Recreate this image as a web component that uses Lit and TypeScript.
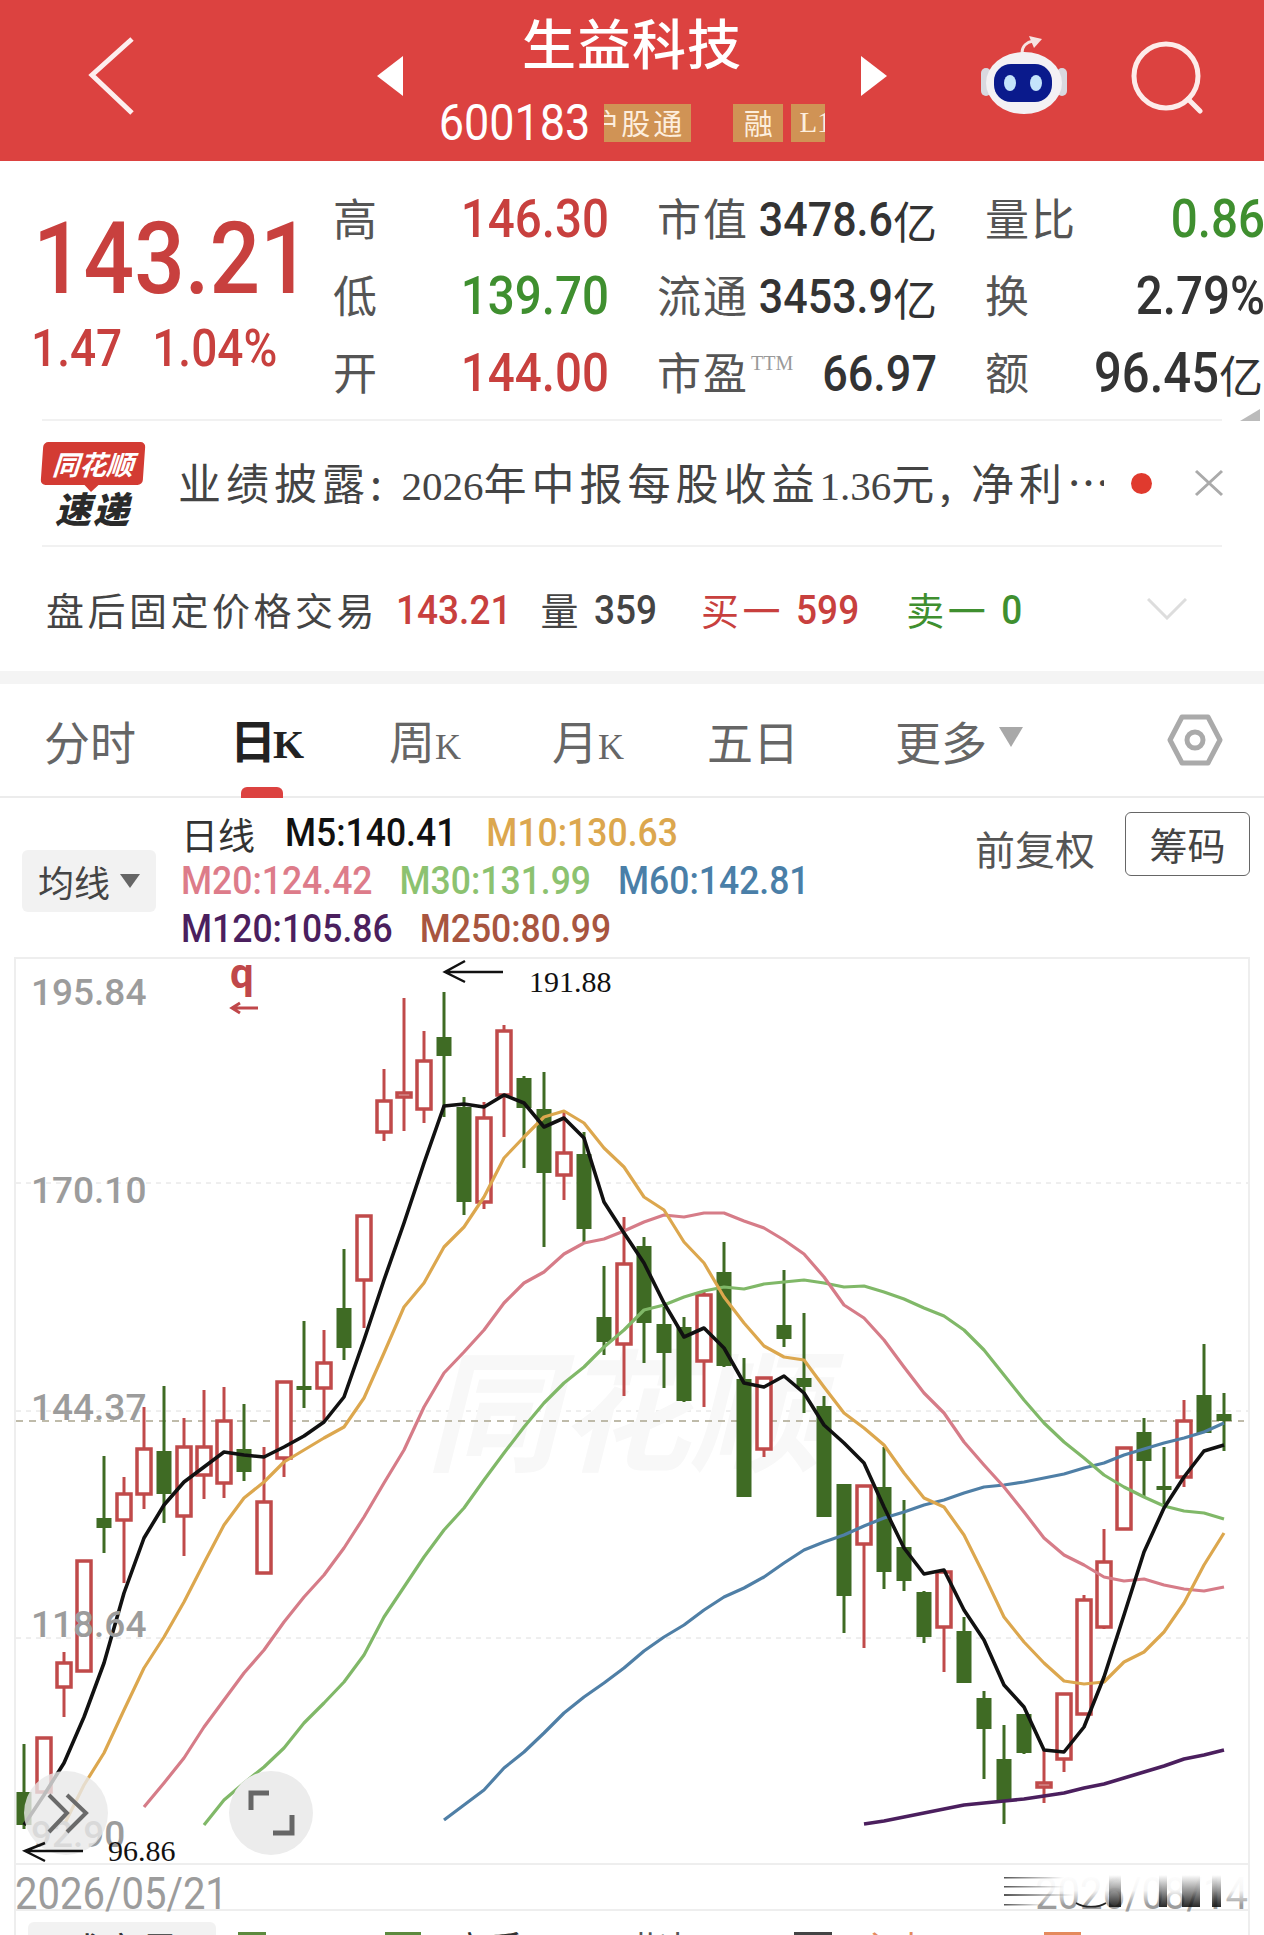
import { LitElement, html, css, svg } from "lit";
import { customElement } from "lit/decorators.js";

// [wick top, wick bottom, body top, body bottom, up?] in page pixels, x = 24 + 20 * index
const CANDLES: [number, number, number, number, number][] = [
  [1744, 1829, 1792, 1825, 0], [1738, 1792, 1738, 1792, 1], [1652, 1717, 1663, 1687, 1], [1561, 1671, 1561, 1671, 1],
  [1456, 1553, 1518, 1528, 0], [1477, 1583, 1494, 1520, 1], [1407, 1509, 1449, 1494, 1], [1386, 1523, 1451, 1494, 0],
  [1418, 1556, 1447, 1516, 1], [1390, 1499, 1447, 1475, 1], [1387, 1498, 1421, 1483, 1], [1404, 1481, 1449, 1472, 0],
  [1447, 1573, 1502, 1573, 1], [1382, 1477, 1382, 1458, 1], [1321, 1408, 1386, 1390, 0], [1330, 1422, 1363, 1388, 1],
  [1249, 1360, 1308, 1348, 0], [1216, 1328, 1216, 1280, 1], [1069, 1141, 1101, 1132, 1], [998, 1131, 1093, 1097, 1],
  [1031, 1123, 1061, 1109, 1], [992, 1117, 1037, 1056, 0], [1097, 1215, 1107, 1202, 0], [1102, 1209, 1118, 1202, 1],
  [1025, 1137, 1031, 1095, 1], [1076, 1168, 1078, 1108, 0], [1072, 1247, 1109, 1173, 0], [1112, 1200, 1153, 1175, 1],
  [1132, 1243, 1154, 1229, 0], [1266, 1355, 1317, 1342, 0], [1217, 1396, 1264, 1344, 1], [1237, 1363, 1246, 1323, 0],
  [1307, 1388, 1324, 1353, 0], [1317, 1402, 1327, 1401, 0], [1290, 1407, 1295, 1361, 1], [1242, 1367, 1272, 1366, 0],
  [1358, 1497, 1379, 1497, 0], [1378, 1457, 1378, 1449, 1], [1270, 1347, 1325, 1339, 0], [1313, 1413, 1378, 1387, 0],
  [1396, 1517, 1406, 1517, 0], [1484, 1633, 1484, 1596, 0], [1486, 1648, 1486, 1544, 1], [1447, 1589, 1487, 1572, 0],
  [1500, 1591, 1547, 1581, 0], [1591, 1643, 1592, 1637, 0], [1570, 1672, 1572, 1627, 1], [1617, 1683, 1631, 1683, 0],
  [1691, 1779, 1698, 1729, 0], [1725, 1824, 1759, 1801, 0], [1714, 1754, 1714, 1753, 0], [1750, 1803, 1783, 1787, 1],
  [1694, 1772, 1694, 1759, 1], [1595, 1714, 1600, 1714, 1], [1529, 1629, 1562, 1627, 1], [1448, 1529, 1448, 1529, 1],
  [1418, 1498, 1432, 1461, 0], [1447, 1505, 1486, 1490, 0], [1400, 1487, 1421, 1477, 1], [1344, 1433, 1395, 1433, 0],
  [1393, 1451, 1414, 1421, 0],
];

// moving averages: first x, then one y every 20px
const LINES: { color: string; w: number; x: number; ys: number[] }[] = [
  { color: "#4b1f5e", w: 3.6, x: 864, ys: [1824, 1821, 1817, 1813, 1809, 1805, 1803, 1801, 1799, 1796, 1793, 1788, 1784, 1778, 1772, 1766, 1759, 1755, 1750] },
  { color: "#4f7fa6", w: 3.2, x: 444, ys: [1820, 1805, 1790, 1768, 1752, 1733, 1713, 1697, 1683, 1668, 1651, 1637, 1625, 1610, 1597, 1588, 1577, 1563, 1550, 1542, 1535, 1526, 1518, 1512, 1505, 1500, 1493, 1487, 1485, 1482, 1478, 1474, 1468, 1463, 1455, 1449, 1443, 1438, 1432, 1423] },
  { color: "#80b868", w: 3.2, x: 204, ys: [1825, 1800, 1783, 1767, 1748, 1723, 1703, 1682, 1655, 1617, 1587, 1557, 1530, 1508, 1480, 1453, 1427, 1403, 1383, 1367, 1347, 1330, 1310, 1305, 1297, 1291, 1287, 1289, 1284, 1282, 1280, 1283, 1287, 1286, 1292, 1299, 1308, 1316, 1330, 1350, 1375, 1400, 1423, 1442, 1458, 1475, 1487, 1497, 1506, 1511, 1513, 1519] },
  { color: "#d67c88", w: 3.2, x: 144, ys: [1807, 1783, 1758, 1727, 1700, 1673, 1650, 1622, 1597, 1575, 1548, 1517, 1483, 1450, 1407, 1373, 1352, 1330, 1303, 1283, 1272, 1254, 1243, 1239, 1231, 1222, 1215, 1217, 1213, 1213, 1221, 1228, 1240, 1254, 1277, 1305, 1318, 1340, 1367, 1393, 1413, 1442, 1465, 1487, 1512, 1538, 1555, 1565, 1577, 1581, 1579, 1585, 1589, 1591, 1587] },
  { color: "#dca74e", w: 3.2, x: 64, ys: [1825, 1785, 1753, 1710, 1668, 1637, 1602, 1563, 1525, 1498, 1482, 1462, 1450, 1438, 1427, 1398, 1353, 1307, 1283, 1247, 1227, 1197, 1158, 1137, 1117, 1111, 1123, 1148, 1167, 1197, 1210, 1242, 1263, 1297, 1323, 1346, 1357, 1360, 1387, 1413, 1428, 1445, 1473, 1498, 1507, 1535, 1575, 1617, 1642, 1663, 1681, 1684, 1682, 1662, 1652, 1632, 1603, 1565, 1533] },
  { color: "#111", w: 3.6, x: 24, ys: [1825, 1795, 1763, 1717, 1663, 1593, 1538, 1505, 1482, 1467, 1452, 1455, 1457, 1447, 1436, 1422, 1397, 1340, 1280, 1223, 1163, 1106, 1104, 1107, 1095, 1103, 1127, 1118, 1138, 1202, 1233, 1263, 1303, 1337, 1328, 1348, 1383, 1387, 1376, 1393, 1425, 1443, 1463, 1507, 1548, 1574, 1570, 1610, 1640, 1685, 1707, 1750, 1752, 1727, 1677, 1615, 1552, 1508, 1477, 1451, 1445] },
];

const AXIS: [string, number][] = [["195.84", 1005], ["170.10", 1203], ["144.37", 1420], ["118.64", 1637]];

@customElement("kline-chart")
export class KlineChart extends LitElement {
  static styles = css`
    :host {
      display: block;
    }
    svg {
      display: block;
      width: 1232px;
      height: 904px;
    }
    .axis {
      font-family: Roboto, "Liberation Sans", sans-serif;
      font-size: 37px;
      font-weight: 500;
      fill: #9c9c9c;
    }
    .note {
      font-family: "Liberation Serif", serif;
      font-size: 30px;
      fill: #111;
    }
    .mark {
      font-family: Roboto, "Liberation Sans", sans-serif;
      font-size: 42px;
      font-weight: 700;
      fill: #c0474a;
    }
    .wm {
      font-family: "Noto Sans CJK SC", sans-serif;
      font-size: 132px;
      font-weight: 700;
      font-style: italic;
      fill: #f8f8f8;
    }
  `;

  candle(c: number[], i: number) {
    const x = 24 + i * 20;
    const [top, bottom, bodyTop, bodyBottom, up] = c;
    const color = up ? "#c04a4a" : "#3f6b24";
    if (up) {
      return svg`
        <line x1=${x} x2=${x} y1=${top} y2=${bottom} stroke=${color} stroke-width="3"></line>
        <rect x=${x - 7} y=${bodyTop} width="14" height=${bodyBottom - bodyTop} fill="#fff" stroke=${color} stroke-width="3.5"></rect>`;
    }
    return svg`
      <line x1=${x} x2=${x} y1=${top} y2=${bottom} stroke=${color} stroke-width="3"></line>
      <rect x=${x - 7.5} y=${bodyTop} width="15" height=${bodyBottom - bodyTop} fill=${color}></rect>`;
  }

  render() {
    return html`
      <svg viewBox="16 959 1232 904">
        <g stroke="#dedede" stroke-dasharray="5 5">
          <line x1="16" x2="1248" y1="1183" y2="1183"></line>
          <line x1="16" x2="1248" y1="1411" y2="1411"></line>
          <line x1="16" x2="1248" y1="1638" y2="1638"></line>
        </g>
        <text class="wm" x="426" y="1461">同花顺</text>
        <line x1="16" x2="1244" y1="1421" y2="1421" stroke="#aaa58f" stroke-width="1.5" stroke-dasharray="7 6"></line>
        ${CANDLES.map((c, i) => this.candle(c, i))}
        ${LINES.map(
          (l) => svg`<polyline fill="none" stroke=${l.color} stroke-width=${l.w} stroke-linejoin="round"
            points=${l.ys.map((y, i) => `${l.x + i * 20},${y}`).join(" ")}></polyline>`
        )}
        ${AXIS.map(([t, y]) => svg`<text class="axis" x="31" y=${y}>${t}</text>`)}
        <text class="axis" x="31" y="1847">92.90</text>

        <text class="mark" x="230" y="988">q</text>
        <path d="M258 1008H232M240 1003l-8 5 8 5" fill="none" stroke="#c0474a" stroke-width="3"></path>
        <path d="M503 972H445M465 961l-20 11 20 10" fill="none" stroke="#111" stroke-width="2.5"></path>
        <text class="note" x="529" y="992">191.88</text>

        <circle cx="66" cy="1813" r="42" fill="#e8e8e8" fill-opacity=".8"></circle>
        <path d="M49 1795l18 18-18 19M67 1795l19 18-19 19" fill="none" stroke="#6a6a6a" stroke-width="4"></path>
        <circle cx="271" cy="1813" r="42" fill="#ececec"></circle>
        <path d="M251 1810v-17h18M273 1833h19v-18" fill="none" stroke="#666" stroke-width="5"></path>
        <path d="M83 1851H25M45 1843l-20 8 20 10" fill="none" stroke="#111" stroke-width="2.5"></path>
        <text class="note" x="108" y="1861">96.86</text>
      </svg>
    `;
  }
}

@customElement("app-root")
export class AppRoot extends LitElement {
  static styles = css`
    :host {
      display: block;
      position: relative;
      width: 1264px;
      height: 1935px;
      overflow: hidden;
      background: #fff;
      font-family: "Noto Sans CJK SC", "Liberation Sans", sans-serif;
      color: #555;
      line-height: 1;
    }
    .n {
      display: inline-block;
      font-family: Roboto, "Liberation Sans", sans-serif;
      font-weight: 500;
      transform: scaleY(1.12);
    }
    .red { color: #c8403e; }
    .green { color: #3f8f2f; }
    .dark { color: #333; }

    header {
      display: grid;
      grid-template-columns: 377px 510px 377px;
      height: 161px;
      background: #dc4240;
      color: #fff;
    }
    .back {
      display: block;
      margin: 37px 0 0 88px;
    }
    .mid {
      display: flex;
      justify-content: space-between;
      align-items: center;
      padding-bottom: 10px;
    }
    .stock {
      display: flex;
      flex-direction: column;
      align-items: center;
      gap: 31px;
      padding-top: 9px;
    }
    .title {
      font-size: 54px;
      font-weight: 500;
      letter-spacing: 1px;
    }
    .code {
      display: flex;
      align-items: center;
    }
    .code .n {
      font-size: 45px;
      font-weight: 400;
      margin-right: 14px;
    }
    .tag {
      height: 38px;
      background: #d09355;
      color: #fdeedd;
      font-size: 29px;
      display: flex;
      align-items: center;
      overflow: hidden;
      white-space: nowrap;
    }
    .tag.hk { width: 87px; justify-content: flex-end; padding-right: 6px; box-sizing: border-box; margin-right: 42px; letter-spacing: 3px; }
    .tag.rong { width: 50px; justify-content: center; margin-right: 8px; }
    .tag.l1 { width: 34px; padding-left: 8px; box-sizing: border-box; font-family: "Liberation Serif", serif; }
    .tools {
      display: flex;
      align-items: flex-start;
      padding: 36px 0 0 94px;
      gap: 62px;
    }
    .tools .search { margin-top: 5px; }

    .stats {
      position: relative;
      display: flex;
      padding: 20px 0 7px 30px;
      height: 231px;
    }
    .price {
      width: 303px;
      flex: none;
    }
    .price .now {
      font-size: 89px;
      margin: 33px 0 0 3px;
      transform: scaleY(1.12);
    }
    .price .sub {
      display: flex;
      gap: 30px;
      margin-top: 22px;
      font-size: 46px;
      margin-left: 1px;
    }
    .grid {
      display: grid;
      grid-template-columns: 276px 280px 280px;
      grid-auto-rows: 77px;
      column-gap: 48px;
    }
    .cell {
      display: flex;
      justify-content: space-between;
      align-items: center;
      font-size: 44px;
      letter-spacing: 2px;
    }
    .cell > span:first-child { padding-bottom: 6px; }
    .cell .n { font-size: 47.5px; letter-spacing: 0; }
    .cell .val {
      color: #333;
      display: flex;
      align-items: center;
      letter-spacing: 0;
    }
    .cell .val .n { font-size: 43px; }
    .cell .val .u { font-size: 44px; }
    .cell .val .wide { font-size: 45px; }
    .cell sup {
      font-family: "Liberation Serif", serif;
      font-size: 20px;
      color: #999;
      letter-spacing: 0;
      margin-left: 2px;
      position: relative;
      top: -4px;
    }
    .cell .val.over { margin-right: 2px; }
    .cell .val.over .n { font-size: 49px; }
    .corner {
      position: absolute;
      right: 4px;
      bottom: -2px;
      width: 0;
      height: 0;
      border-left: 20px solid transparent;
      border-bottom: 12px solid #bbb;
    }

    .news {
      display: flex;
      align-items: center;
      margin: 0 42px;
      border-top: 2px solid #f1f1f1;
      border-bottom: 2px solid #f1f1f1;
      box-sizing: border-box;
      height: 128px;
      position: relative;
    }
    .logo {
      width: 102px;
      flex: none;
      display: flex;
      flex-direction: column;
      align-items: center;
    }
    .logo .badge {
      position: relative;
      width: 102px;
      height: 43px;
      background: #d33b33;
      border-radius: 5px;
      transform: skewX(-4deg);
      color: #fff;
      font-size: 27px;
      font-weight: 700;
      font-style: italic;
      display: flex;
      align-items: center;
      justify-content: center;
    }
    .logo .badge::after {
      content: "";
      position: absolute;
      left: 44px;
      bottom: -7px;
      border: 7px solid transparent;
      border-bottom: 0;
      border-top-color: #d33b33;
    }
    .logo .fast {
      margin-top: 4px;
      font-size: 36px;
      font-weight: 900;
      font-style: italic;
      color: #2a2a2a;
      letter-spacing: 2px;
    }
    .headline {
      margin-left: 34px;
      font-size: 43px;
      letter-spacing: 5px;
      color: #444;
      white-space: nowrap;
      flex: none;
      width: 926px;
      overflow: hidden;
    }
    .headline i {
      font-family: "Liberation Serif", serif;
      font-style: normal;
      letter-spacing: 0;
      font-size: 41px;
    }
    .dot {
      width: 21px;
      height: 21px;
      border-radius: 50%;
      background: #e03a2e;
      margin-left: 27px;
      flex: none;
    }
    .close {
      margin-left: 42px;
      flex: none;
    }

    .after {
      display: flex;
      align-items: center;
      height: 124px;
      padding-left: 46px;
      font-size: 38px;
      color: #444;
      position: relative;
      letter-spacing: 3.5px;
    }
    .after .n {
      font-size: 37px;
      letter-spacing: 0;
    }
    .after .g1 { margin-left: 18px; }
    .after .g2 { margin-left: 29px; }
    .after .g3 { margin-left: 44px; }
    .after .g4 { margin-left: 47px; }
    .after .t { margin-right: 12px; }
    .after svg { position: absolute; left: 1147px; top: 51px; }

    .band {
      height: 13px;
      background: #f4f4f4;
    }

    .tabs {
      display: grid;
      grid-template-columns: 186px 159px 163px 155px 188px 272px 60px;
      align-items: center;
      height: 114px;
      padding-left: 44px;
      box-sizing: border-box;
      border-bottom: 2px solid #ececec;
      font-size: 46px;
      color: #666;
      position: relative;
    }
    .tabs .k {
      font-family: "Liberation Serif", serif;
      font-size: 36px;
    }
    .tabs .on {
      color: #222;
      font-weight: 700;
    }
    .tabs .on .k {
      font-size: 40px;
      margin-left: -3px;
    }
    .tabs .more {
      display: flex;
      align-items: center;
    }
    .tri {
      width: 0;
      height: 0;
      border-left: 12px solid transparent;
      border-right: 12px solid transparent;
      border-top: 20px solid #a8a8a8;
    }
    .more .tri { margin: 0 0 6px 12px; }
    .bar {
      position: absolute;
      left: 241px;
      bottom: -2px;
      width: 42px;
      height: 11px;
      background: #dc4240;
      border-radius: 6px 6px 0 0;
    }

    .legend {
      display: flex;
      height: 159px;
      padding-left: 22px;
    }
    .ma-btn {
      width: 134px;
      height: 62px;
      margin-top: 52px;
      background: #f2f2f2;
      border-radius: 6px;
      font-size: 36px;
      color: #444;
      display: flex;
      align-items: center;
      justify-content: center;
      gap: 10px;
      flex: none;
    }
    .ma-btn .tri {
      border-width: 14px 10px 0;
      border-top-color: #666;
    }
    .rows {
      margin-left: 25px;
      padding-top: 12px;
    }
    .row {
      display: flex;
      align-items: center;
      gap: 27px;
      height: 48px;
      white-space: nowrap;
    }
    .row.first { gap: 30px; }
    .row .n { font-size: 35.5px; transform: scaleY(1.1); }
    .row .lbl {
      font-size: 37px;
      color: #333;
    }
    .right {
      margin-left: auto;
      margin-right: 14px;
      display: flex;
      align-items: flex-start;
      gap: 30px;
      padding-top: 14px;
    }
    .fq {
      font-size: 40px;
      margin-top: 16px;
      color: #555;
    }
    .chip {
      width: 125px;
      height: 64px;
      box-sizing: border-box;
      border: 1.5px solid #666;
      border-radius: 6px;
      font-size: 38px;
      color: #444;
      display: flex;
      align-items: center;
      justify-content: center;
    }

    .frame {
      margin: 0 14px;
      border-left: 2px solid #eee;
      border-right: 2px solid #eee;
    }
    kline-chart {
      border-top: 2px solid #eee;
      border-bottom: 2px solid #eee;
    }
    .dates {
      position: relative;
      display: flex;
      justify-content: space-between;
      align-items: flex-end;
      height: 44px;
      border-bottom: 2px solid #eee;
      font-family: Roboto, "Liberation Sans", sans-serif;
      font-size: 40px;
      color: #9c9c9c;
    }
    .dates span {
      display: inline-block;
      margin: 0 0 -8px -1px;
      transform: scaleY(1.1);
      transform-origin: bottom;
    }
    .dates svg {
      position: absolute;
      right: 0;
      bottom: 0;
    }
    .sub-tabs {
      display: grid;
      grid-template-columns: 210px 147px 67px 181px 161px 65px 185px 37px;
      padding: 11px 0 0 12px;
      align-items: start;
    }
    .sub-tabs .btn {
      width: 188px;
      height: 60px;
      background: #f2f2f2;
      border-radius: 6px 6px 0 0;
      font-size: 38px;
      color: #333;
      padding-top: 8px;
      box-sizing: border-box;
      text-align: center;
    }
    .sub-tabs .txt {
      margin-top: 7px;
      font-size: 36px;
      white-space: nowrap;
    }
    .sub-tabs .box {
      margin-top: 10px;
      height: 20px;
      box-sizing: border-box;
    }
    .hollow { width: 28px; border: 3px solid #5d8a3e; }
    .solid { width: 36px; background: #5d8a3e; }
    .ink { width: 38px; background: #444; }
    .peach { width: 37px; background: #e58a5c; }
  `;

  cell(label: unknown, value: unknown) {
    return html`<div class="cell"><span>${label}</span>${value}</div>`;
  }

  render() {
    return html`
      <header>
        <div>
          <svg class="back" width="48" height="80" viewBox="0 0 48 80" fill="none" stroke="#fdeeee" stroke-width="5">
            <path d="M44 2 4 38l40 38"></path>
          </svg>
        </div>
        <div class="mid">
          <svg width="26" height="40" viewBox="0 0 26 40"><path d="M26 0v40L0 20z" fill="#fff"></path></svg>
          <div class="stock">
            <div class="title">生益科技</div>
            <div class="code">
              <span class="n">600183</span>
              <span class="tag hk">沪股通</span>
              <span class="tag rong">融</span>
              <span class="tag l1">L1</span>
            </div>
          </div>
          <svg width="26" height="40" viewBox="0 0 26 40"><path d="M0 0v40l26-20z" fill="#fff"></path></svg>
        </div>
        <div class="tools">
          <svg width="88" height="78" viewBox="0 0 88 78">
            <path d="M41 17c0-7 5-11 11-12" fill="none" stroke="#f6e4e2" stroke-width="3"></path>
            <path d="M48 0l13 3-8 9z" fill="#f6e4e2"></path>
            <rect x="0" y="32" width="10" height="28" rx="5" fill="#d9d9e0"></rect>
            <rect x="76" y="32" width="10" height="28" rx="5" fill="#d9d9e0"></rect>
            <ellipse cx="43" cy="47" rx="38" ry="31" fill="#f3f1f4"></ellipse>
            <rect x="13" y="28" width="58" height="38" rx="17" fill="#0a1a8c"></rect>
            <ellipse cx="29" cy="47" rx="6" ry="8" fill="#c4e4fb"></ellipse>
            <ellipse cx="55" cy="47" rx="6" ry="8" fill="#c4e4fb"></ellipse>
          </svg>
          <svg class="search" width="72" height="76" viewBox="0 0 72 76" fill="none" stroke="#fdecea" stroke-width="5">
            <circle cx="35" cy="35" r="32"></circle>
            <path d="M57 58l12 12" stroke-linecap="round"></path>
          </svg>
        </div>
      </header>

      <section class="stats">
        <div class="price red">
          <div class="n now">143.21</div>
          <div class="sub"><span class="n">1.47</span><span class="n">1.04%</span></div>
        </div>
        <div class="grid">
          ${this.cell("高", html`<span class="n red">146.30</span>`)}
          ${this.cell("市值", html`<span class="val"><span class="n">3478.6</span><span class="u">亿</span></span>`)}
          ${this.cell("量比", html`<span class="n green">0.86</span>`)}
          ${this.cell("低", html`<span class="n green">139.70</span>`)}
          ${this.cell("流通", html`<span class="val"><span class="n">3453.9</span><span class="u">亿</span></span>`)}
          ${this.cell("换", html`<span class="n dark">2.79%</span>`)}
          ${this.cell("开", html`<span class="n red">144.00</span>`)}
          ${this.cell(html`市盈<sup>TTM</sup>`, html`<span class="val"><span class="n wide">66.97</span></span>`)}
          ${this.cell("额", html`<span class="val over"><span class="n">96.45</span><span class="u">亿</span></span>`)}
        </div>
        <div class="corner"></div>
      </section>

      <section class="news">
        <div class="logo">
          <div class="badge">同花顺</div>
          <div class="fast">速递</div>
        </div>
        <div class="headline">业绩披露: <i>2026</i>年中报每股收益<i>1.36</i>元, 净利…</div>
        <div class="dot"></div>
        <svg class="close" width="30" height="28" viewBox="0 0 30 28" fill="none" stroke="#aaa" stroke-width="3">
          <path d="M2 2l26 24M28 2 2 26"></path>
        </svg>
      </section>

      <section class="after">
        <span>盘后固定价格交易</span>
        <span class="n red g1">143.21</span>
        <span class="g2 t">量</span><span class="n">359</span>
        <span class="g3 t red">买一</span><span class="n red">599</span>
        <span class="g4 t green">卖一</span><span class="n green">0</span>
        <svg width="40" height="22" viewBox="0 0 40 22" fill="none" stroke="#ddd" stroke-width="3">
          <path d="M1 1l19 19L39 1"></path>
        </svg>
      </section>

      <div class="band"></div>

      <nav class="tabs">
        <span>分时</span>
        <span class="on">日<span class="k">K</span></span>
        <span>周<span class="k">K</span></span>
        <span>月<span class="k">K</span></span>
        <span>五日</span>
        <span class="more">更多<span class="tri"></span></span>
        <svg width="56" height="52" viewBox="0 0 56 52" fill="none" stroke="#aaa" stroke-width="5">
          <path d="M15 3h26l12 23-12 23H15L3 26z" stroke-linejoin="round"></path>
          <circle cx="28" cy="26" r="8"></circle>
        </svg>
        <span class="bar"></span>
      </nav>

      <section class="legend">
        <div class="ma-btn">均线<span class="tri"></span></div>
        <div class="rows">
          <div class="row first">
            <span class="lbl">日线</span><span class="n" style="color:#111">M5:140.41</span><span class="n" style="color:#dca74e">M10:130.63</span>
          </div>
          <div class="row">
            <span class="n" style="color:#dd7c8a">M20:124.42</span><span class="n" style="color:#8cc270">M30:131.99</span><span class="n" style="color:#4a7fa8">M60:142.81</span>
          </div>
          <div class="row">
            <span class="n" style="color:#4b1f5e">M120:105.86</span><span class="n" style="color:#a8553f">M250:80.99</span>
          </div>
        </div>
        <div class="right">
          <span class="fq">前复权</span>
          <span class="chip">筹码</span>
        </div>
      </section>

      <div class="frame">
        <kline-chart></kline-chart>
        <div class="dates">
          <span>2026/05/21</span>
          <span>2026/08/14</span>
          <svg width="244" height="36" viewBox="0 0 244 36">
            <defs>
              <linearGradient id="fade" x1="0" y1="0" x2="0" y2="1">
                <stop offset="0" stop-color="#111" stop-opacity="0"></stop>
                <stop offset="1" stop-color="#111" stop-opacity=".9"></stop>
              </linearGradient>
              <linearGradient id="wash" x1="0" y1="0" x2="0" y2="1">
                <stop offset="0" stop-color="#fff"></stop>
                <stop offset=".55" stop-color="#fff" stop-opacity=".9"></stop>
                <stop offset="1" stop-color="#fff" stop-opacity="0"></stop>
              </linearGradient>
              <linearGradient id="streak" x1="0" y1="0" x2="1" y2="0">
                <stop offset="0" stop-color="#555"></stop>
                <stop offset="1" stop-color="#555" stop-opacity="0"></stop>
              </linearGradient>
            </defs>
            <rect x="30" y="0" width="214" height="32" fill="url(#wash)"></rect>
            <rect x="0" y="4" width="60" height="1.5" fill="url(#streak)"></rect>
            <rect x="0" y="13" width="60" height="1.5" fill="url(#streak)"></rect>
            <rect x="0" y="21" width="70" height="2" fill="url(#streak)"></rect>
            <rect x="0" y="31" width="40" height="1.5" fill="url(#streak)"></rect>
            <rect x="105" y="2" width="12" height="32" fill="url(#fade)"></rect>
            <rect x="155" y="2" width="8" height="32" fill="url(#fade)"></rect>
            <rect x="178" y="2" width="18" height="32" fill="url(#fade)"></rect>
            <rect x="208" y="2" width="9" height="32" fill="url(#fade)"></rect>
            <path d="M72 30c8 5 22 5 30 0" fill="none" stroke="#222" stroke-width="1.5"></path>
          </svg>
        </div>
        <div class="sub-tabs">
          <div class="btn">成交量</div>
          <div class="box hollow"></div>
          <div class="box solid"></div>
          <div class="txt dark">高手</div>
          <div class="txt">指标</div>
          <div class="box ink"></div>
          <div class="txt" style="color:#e58a5c">主力</div>
          <div class="box peach"></div>
        </div>
      </div>
    `;
  }
}
